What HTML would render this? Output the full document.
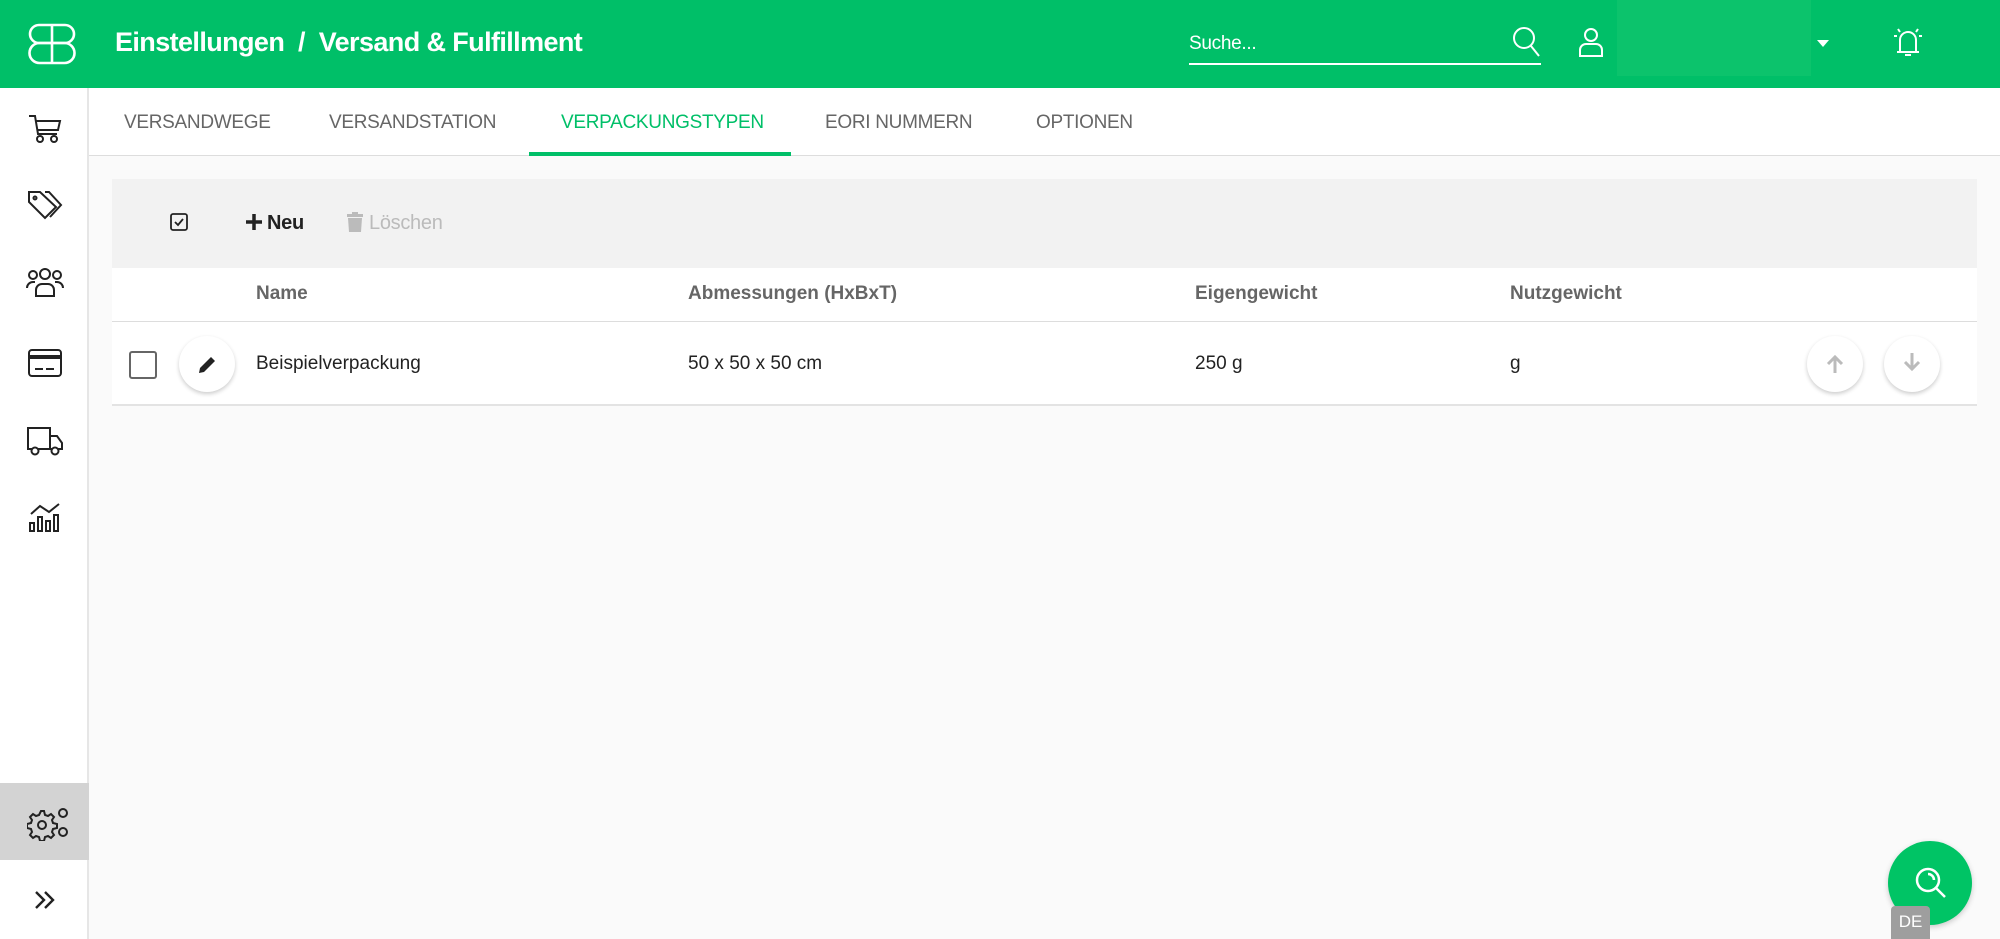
<!DOCTYPE html>
<html><head><meta charset="utf-8"><style>
*{box-sizing:border-box;margin:0;padding:0}
body{width:2000px;height:939px;overflow:hidden;background:#fafafa;font-family:"Liberation Sans",Roboto,sans-serif;position:relative;color:#222}
.hdr{position:absolute;left:0;top:0;width:2000px;height:88px;background:#00bf68}
.abs{position:absolute}
.side{position:absolute;left:0;top:88px;width:89px;height:851px;background:#fff;border-right:2px solid #e6e6e6}
.tabs{position:absolute;left:89px;top:88px;right:0;height:68px;background:#fff;border-bottom:1px solid #ddd}
.tab{position:absolute;top:24px;font-size:19px;color:#666;letter-spacing:-0.3px}
.th{position:absolute;top:283px;font-size:19px;font-weight:bold;color:#666}
.td{position:absolute;top:353px;font-size:19px;color:#222}
.circ{position:absolute;width:56px;height:56px;border-radius:50%;background:#fff;box-shadow:0 2px 4px rgba(0,0,0,.2)}
svg{position:absolute}
</style></head><body>
<div class="hdr"></div>
<svg style="left:28px;top:23px" width="48" height="42" viewBox="0 0 48 42" fill="none" stroke="#fff" stroke-width="2.6"><rect x="2" y="2" width="44" height="18" rx="9"/><rect x="1.5" y="20" width="45" height="20" rx="10"/><path d="M24 2v38"/></svg>
<div class="abs" style="left:115px;top:27px;font-size:27px;color:#fff;font-weight:bold;letter-spacing:-0.6px">Einstellungen &nbsp;/ &nbsp;Versand &amp; Fulfillment</div>
<div class="abs" style="left:1189px;top:33px;font-size:19px;color:#fff;letter-spacing:-0.3px">Suche...</div>
<div class="abs" style="left:1189px;top:63px;width:352px;height:2px;background:#fff"></div>
<svg style="left:1512px;top:26px" width="30" height="32" viewBox="0 0 30 32" fill="none" stroke="#fff" stroke-width="2"><circle cx="12" cy="12" r="10"/><path d="M19 20l8 10"/></svg>
<svg style="left:1578px;top:28px" width="26" height="30" viewBox="0 0 26 30" fill="none" stroke="#fff" stroke-width="2"><circle cx="13" cy="7" r="6"/><path d="M2 28v-6a6 6 0 0 1 6-6h10a6 6 0 0 1 6 6v6z"/></svg>
<div class="abs" style="left:1617px;top:0;width:194px;height:76px;background:#0cc36c"></div>
<div class="abs" style="left:1817px;top:40px;border-left:6px solid transparent;border-right:6px solid transparent;border-top:7px solid #fff"></div>
<svg style="left:1890px;top:26px" width="36" height="34" viewBox="0 0 36 34" fill="none" stroke="#fff" stroke-width="2"><path d="M10 26V14a8 8 0 0 1 16 0v12zM7 26h22M15 29h6M4 10h3M29 10h3M8 3l2 3M28 3l-2 3"/></svg>
<div class="side"></div>
<svg style="left:28px;top:114px" width="34" height="30" viewBox="0 0 34 30" fill="none" stroke="#222" stroke-width="2"><path d="M1 2h6l3 18h19M8 7h24l-2 9H9"/><circle cx="12" cy="25" r="3"/><circle cx="26" cy="25" r="3"/></svg>
<svg style="left:27px;top:189px" width="36" height="32" viewBox="0 0 36 32" fill="none" stroke="#222" stroke-width="2"><path d="M2 3v10l16 16 11-11L13 3z"/><circle cx="8" cy="9" r="1.5"/><path d="M18 3h4l12 13-11 12"/></svg>
<svg style="left:26px;top:268px" width="38" height="30" viewBox="0 0 38 30" fill="none" stroke="#222" stroke-width="2"><circle cx="7" cy="7" r="4"/><circle cx="19" cy="6" r="5"/><circle cx="31" cy="7" r="4"/><path d="M1 20a6 6 0 0 1 6-6h2M37 20a6 6 0 0 0-6-6h-2M10 28v-6a6 6 0 0 1 6-6h6a6 6 0 0 1 6 6v6z"/></svg>
<svg style="left:28px;top:349px" width="34" height="28" viewBox="0 0 34 28" fill="none" stroke="#222" stroke-width="2"><rect x="1" y="1" width="32" height="26" rx="3"/><path d="M1 8h32" stroke-width="4"/><path d="M7 20h8M18 20h8"/></svg>
<svg style="left:27px;top:426px" width="36" height="30" viewBox="0 0 36 30" fill="none" stroke="#222" stroke-width="2"><path d="M1 2h22v21H1zM23 10h7l5 7v6h-12"/><circle cx="8" cy="25" r="3.5" fill="#fff"/><circle cx="28" cy="25" r="3.5" fill="#fff"/></svg>
<svg style="left:28px;top:501px" width="34" height="32" viewBox="0 0 34 32" fill="none" stroke="#222" stroke-width="2"><path d="M3 13l9-8 9 6 10-8"/><rect x="2" y="22" width="4" height="8"/><rect x="10" y="16" width="4" height="14"/><rect x="18" y="20" width="4" height="10"/><rect x="26" y="14" width="4" height="16"/></svg>
<div class="abs" style="left:0;top:783px;width:89px;height:77px;background:#d3d3d3"></div>
<svg style="left:27px;top:805px" width="44" height="36" viewBox="0 0 44 36" fill="none" stroke="#222" stroke-width="2"><path d="M14 6l3 0 1 4 3 1 3-2 3 3-2 3 1 3 4 1v4l-4 1-1 3 2 3-3 3-3-2-3 1-1 4h-4l-1-4-3-1-3 2-3-3 2-3-1-3-4-1v-4l4-1 1-3-2-3 3-3 3 2 3-1z"/><circle cx="15" cy="20" r="4"/><circle cx="36" cy="8" r="4"/><circle cx="36" cy="27" r="4"/></svg>
<svg style="left:34px;top:890px" width="22" height="20" viewBox="0 0 22 20" fill="none" stroke="#222" stroke-width="2.4"><path d="M2 2l8 8-8 8M11 2l8 8-8 8"/></svg>
<div class="tabs"></div>
<div class="tab" style="left:124px;top:112px">VERSANDWEGE</div>
<div class="tab" style="left:329px;top:112px">VERSANDSTATION</div>
<div class="tab" style="left:561px;top:112px;color:#00bf68">VERPACKUNGSTYPEN</div>
<div class="abs" style="left:529px;top:152px;width:262px;height:4px;background:#00bf68"></div>
<div class="tab" style="left:825px;top:112px">EORI NUMMERN</div>
<div class="tab" style="left:1036px;top:112px">OPTIONEN</div>
<div class="abs" style="left:112px;top:179px;width:1865px;height:89px;background:#f2f2f2"></div>
<svg style="left:170px;top:213px" width="18" height="18" viewBox="0 0 18 18" fill="none" stroke="#222" stroke-width="1.8"><rect x="1" y="1" width="16" height="16" rx="2"/><path d="M5 9l3 3 5-6"/></svg>
<svg style="left:245px;top:213px" width="18" height="18" viewBox="0 0 18 18" fill="none" stroke="#222" stroke-width="3.5"><path d="M9 1v16M1 9h16"/></svg>
<div class="abs" style="left:267px;top:212px;font-size:20px;font-weight:bold;color:#222;letter-spacing:-0.3px">Neu</div>
<svg style="left:347px;top:212px" width="16" height="20" viewBox="0 0 16 20" fill="#bbb"><rect x="0" y="2" width="16" height="3"/><rect x="5" y="0" width="6" height="3"/><path d="M1 6h14l-1 14H2z"/></svg>
<div class="abs" style="left:369px;top:212px;font-size:20px;color:#bbb;letter-spacing:-0.3px">Löschen</div>
<div class="abs" style="left:112px;top:268px;width:1865px;height:138px;background:#fff;border-bottom:2px solid #e3e3e3"></div>
<div class="abs" style="left:112px;top:321px;width:1865px;height:1px;background:#ddd"></div>
<div class="th" style="left:256px">Name</div>
<div class="th" style="left:688px">Abmessungen (HxBxT)</div>
<div class="th" style="left:1195px">Eigengewicht</div>
<div class="th" style="left:1510px">Nutzgewicht</div>
<div class="abs" style="left:129px;top:351px;width:28px;height:28px;border:2.5px solid #666;border-radius:3px"></div>
<div class="circ" style="left:179px;top:336px"></div>
<svg style="left:197px;top:355px" width="20" height="20" viewBox="0 0 20 20" fill="#222"><path d="M2 18l1-5L14 2l4 4L7 17zM13 3l4 4"/></svg>
<div class="td" style="left:256px">Beispielverpackung</div>
<div class="td" style="left:688px">50 x 50 x 50 cm</div>
<div class="td" style="left:1195px">250 g</div>
<div class="td" style="left:1510px">g</div>
<div class="circ" style="left:1807px;top:336px"></div>
<div class="circ" style="left:1884px;top:336px"></div>
<svg style="left:1826px;top:354px" width="18" height="20" viewBox="0 0 18 20" fill="none" stroke="#bbb" stroke-width="3"><path d="M9 19V3M2 10l7-7 7 7"/></svg>
<svg style="left:1903px;top:352px" width="18" height="20" viewBox="0 0 18 20" fill="none" stroke="#bbb" stroke-width="3"><path d="M9 1v16M2 10l7 7 7-7"/></svg>
<div class="abs" style="left:1888px;top:841px;width:84px;height:84px;border-radius:50%;background:#00c465;box-shadow:0 2px 6px rgba(0,0,0,.2)"></div>
<svg style="left:1913px;top:865px" width="36" height="36" viewBox="0 0 36 36" fill="none" stroke="#fff" stroke-width="2.5"><circle cx="15" cy="15" r="11"/><path d="M23 23l9 9M15 9a6 6 0 0 1 6 6"/></svg>
<div class="abs" style="left:1891px;top:906px;width:39px;height:33px;background:#9e9e9e;border-radius:4px 4px 0 0;color:#fff;font-size:17px;text-align:center;line-height:32px">DE</div>
</body></html>
